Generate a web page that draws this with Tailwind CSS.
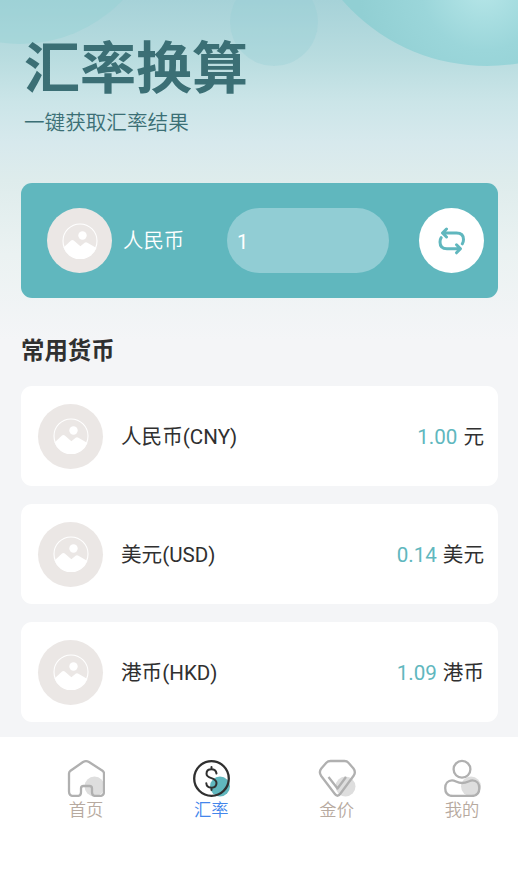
<!DOCTYPE html>
<html lang="zh-CN">
<head>
<meta charset="utf-8">
<meta name="viewport" content="width=device-width, initial-scale=1">
<title>汇率换算</title>
<script src="https://cdn.jsdelivr.net/npm/@tailwindcss/browser@4"></script>
</head>
<body class="bg-[#f4f5f7] font-['Roboto','Noto_Sans_CJK_SC',sans-serif] text-[#303030]">
<svg class="hidden">
  <symbol id="photo" viewBox="0 0 36 36">
    <circle cx="18" cy="18" r="17" fill="none" stroke="#fff" stroke-width="1.1"/>
    <circle cx="20.500" cy="12.500" r="4.2" fill="#fff"/>
    <path d="M1.500 24.500 9 17.500q1.400-1 2.800 0l6.600 5.700 4.200-3.400q1.400-1 2.800 0L34.500 25A17.500 17.500 0 0 1 1.500 24.500Z" fill="#fff"/>
  </symbol>
</svg>
<div class="relative flex h-[878px] w-[518px] flex-col overflow-hidden">
  <svg class="absolute inset-0 -z-10" width="518" height="340" viewBox="0 0 518 340">
    <defs>
      <linearGradient id="sky" x1="0" y1="0" x2="0" y2="1">
        <stop offset="0" stop-color="#a6d2d8"/>
        <stop offset=".18" stop-color="#badde0"/>
        <stop offset=".3" stop-color="#cbe5e8"/>
        <stop offset=".42" stop-color="#d7e9ed"/>
        <stop offset=".53" stop-color="#deecec"/>
        <stop offset=".75" stop-color="#ebf2f2"/>
        <stop offset="1" stop-color="#f4f5f7"/>
      </linearGradient>
      <radialGradient id="orb" gradientUnits="userSpaceOnUse" cx="484" cy="-12" r="125">
        <stop offset="0" stop-color="#b6e6e8"/>
        <stop offset=".5" stop-color="#9bd6da"/>
        <stop offset="1" stop-color="#91cfd3"/>
      </radialGradient>
    </defs>
    <rect width="518" height="340" fill="url(#sky)"/>
    <circle cx="20" cy="-98" r="142" fill="#93d2d5" fill-opacity=".42"/>
    <circle cx="274" cy="22" r="44" fill="#93ccd4" fill-opacity=".3"/>
    <circle cx="487" cy="-126" r="192" fill="url(#orb)"/>
  </svg>

  <header class="h-[183px] shrink-0 pl-[24px] pt-[36px] text-[#3b6f75]">
    <h1 class="text-[56px] leading-[66px] font-bold">汇率换算</h1>
    <p class="mt-[5px] text-[20.6px] leading-[32px] font-[350]">一键获取汇率结果</p>
  </header>

  <section class="mr-[20px] ml-[21px] flex h-[115px] shrink-0 items-center rounded-[11px] bg-[#60b7be] pr-[14px] pl-[26px]">
    <div class="flex size-[65px] items-center justify-center rounded-full bg-[#ebe7e5]"><svg class="size-[36px]"><use href="#photo"/></svg></div>
    <span class="ml-[11px] w-[104px] pt-[2px] text-[20.4px] font-[350] text-white">人民币</span>
    <div class="flex h-[65px] w-[162px] items-center rounded-full bg-[#91cdd4] pt-[2px] pl-[10px] text-[20px] text-white">1</div>
    <button class="ml-auto flex size-[65px] items-center justify-center rounded-full bg-white">
      <svg width="28" height="28" viewBox="0 0 28 28" fill="none" stroke="#60b7be" stroke-width="3" stroke-linecap="round" stroke-linejoin="round">
        <path d="M5.500 6H18.500Q25.500 6 25.500 12.500Q25.500 15 24.300 16.800M8.500 2 4.500 6 8.500 10"/>
        <path d="M21 21.800H9Q2 21.800 2 15Q2 12.500 3.200 10.700M18.500 17.800 22.500 21.800 18.500 25.800"/>
      </svg>
    </button>
  </section>

  <h2 class="mt-[36px] ml-[21px] h-[34px] shrink-0 text-[23.4px] leading-[34px] font-bold">常用货币</h2>

  <main class="mt-[18px] mr-[20px] ml-[21px] flex h-[351px] shrink-0 flex-col gap-[18px] text-[20.6px]">
    <div class="flex h-[100px] shrink-0 items-center rounded-[11px] bg-white pr-[14px] pl-[17px]">
      <div class="flex size-[65px] items-center justify-center rounded-full bg-[#ebe7e5]"><svg class="size-[36px]"><use href="#photo"/></svg></div>
      <span class="ml-[18px] pt-[2px]">人民币(CNY)</span>
      <span class="ml-auto pt-[2px]"><span class="mr-[6px] text-[#60b7be]">1.00</span>元</span>
    </div>
    <div class="flex h-[100px] shrink-0 items-center rounded-[11px] bg-white pr-[14px] pl-[17px]">
      <div class="flex size-[65px] items-center justify-center rounded-full bg-[#ebe7e5]"><svg class="size-[36px]"><use href="#photo"/></svg></div>
      <span class="ml-[18px] pt-[2px]">美元(USD)</span>
      <span class="ml-auto pt-[2px]"><span class="mr-[6px] text-[#60b7be]">0.14</span>美元</span>
    </div>
    <div class="flex h-[100px] shrink-0 items-center rounded-[11px] bg-white pr-[14px] pl-[17px]">
      <div class="flex size-[65px] items-center justify-center rounded-full bg-[#ebe7e5]"><svg class="size-[36px]"><use href="#photo"/></svg></div>
      <span class="ml-[18px] pt-[2px]">港币(HKD)</span>
      <span class="ml-auto pt-[2px]"><span class="mr-[6px] text-[#60b7be]">1.09</span>港币</span>
    </div>
  </main>

  <nav class="flex flex-1 items-start justify-between bg-white pt-[22px] pr-[37px] pl-[67px] text-[17.3px] leading-[26px] font-[350] text-[#b7aaa0]">
    <div class="flex w-[38px] flex-col items-center">
      <svg width="38" height="38" viewBox="0 0 38 38" fill="none" stroke="#b0b0b0" stroke-width="2.300" stroke-linejoin="round">
        <circle cx="27.500" cy="27.500" r="10" fill="#dedede" stroke="none"/>
        <path d="M2 14.500Q2 12.800 3.500 11.700L16 3Q19 1.200 22 3L35.500 11.700Q37 12.800 37 14.500V32.500Q37 37 32.500 37H29Q25 37 25 33V29.500Q25 27 22.500 27H16.500Q14 27 14 29.500V33Q14 37 10 37H6.500Q2 37 2 32.500Z"/>
      </svg>
      <span class="whitespace-nowrap">首页</span>
    </div>
    <div class="flex w-[38px] flex-col items-center text-[#4386eb]">
      <svg width="38" height="38" viewBox="0 0 38 38" fill="none" stroke="#303030" stroke-width="2.300" stroke-linecap="round">
        <circle cx="28" cy="27.500" r="10" fill="#60b7be" stroke="none"/>
        <circle cx="19.500" cy="19.500" r="17.300"/>
        <path stroke-width="2" d="M24.500 14.500C24 11.300 22 10.300 19.500 10.300C16.500 10.300 14.500 12 14.500 14.700C14.500 20.300 24.500 18 24.500 24C24.500 27 22.500 28.700 19.500 28.700C16.500 28.700 14.500 27 14.300 24.300M19.500 8V10M19.500 29V31"/>
      </svg>
      <span class="whitespace-nowrap">汇率</span>
    </div>
    <div class="flex w-[38px] flex-col items-center">
      <svg width="38" height="38" viewBox="0 0 38 38" fill="none" stroke="#b0b0b0" stroke-width="2.300" stroke-linejoin="round">
        <circle cx="27.500" cy="27.500" r="10" fill="#dedede" stroke="none"/>
        <path d="M12.500 2H26.500Q29 2 30.500 3.800L35.500 9.500Q38 13 35.800 16.500L22.500 34.500Q19.500 39 16.500 34.500L3.200 17Q.5 13 3.300 9.500L8.300 3.800Q10 2 12.500 2Z"/>
        <path d="M10.500 18 19.500 29.500 28 18"/>
      </svg>
      <span class="whitespace-nowrap">金价</span>
    </div>
    <div class="flex w-[38px] flex-col items-center">
      <svg width="38" height="38" viewBox="0 0 38 38" fill="none" stroke="#b0b0b0" stroke-width="2.300" stroke-linejoin="round">
        <circle cx="28" cy="27.500" r="10" fill="#dedede" stroke="none"/>
        <circle cx="19" cy="10.300" r="8.400"/>
        <path d="M9 21.300C12.500 21.300 14 24 19 24C24.500 24 26 21.300 29.500 21.300C33.500 21.300 36.300 24.500 36.300 29C36.300 34 33.500 37 28.500 37H10C5 37 2.200 34 2.200 29C2.200 24.500 5 21.300 9 21.300Z"/>
      </svg>
      <span class="whitespace-nowrap">我的</span>
    </div>
  </nav>
</div>
</body>
</html>
